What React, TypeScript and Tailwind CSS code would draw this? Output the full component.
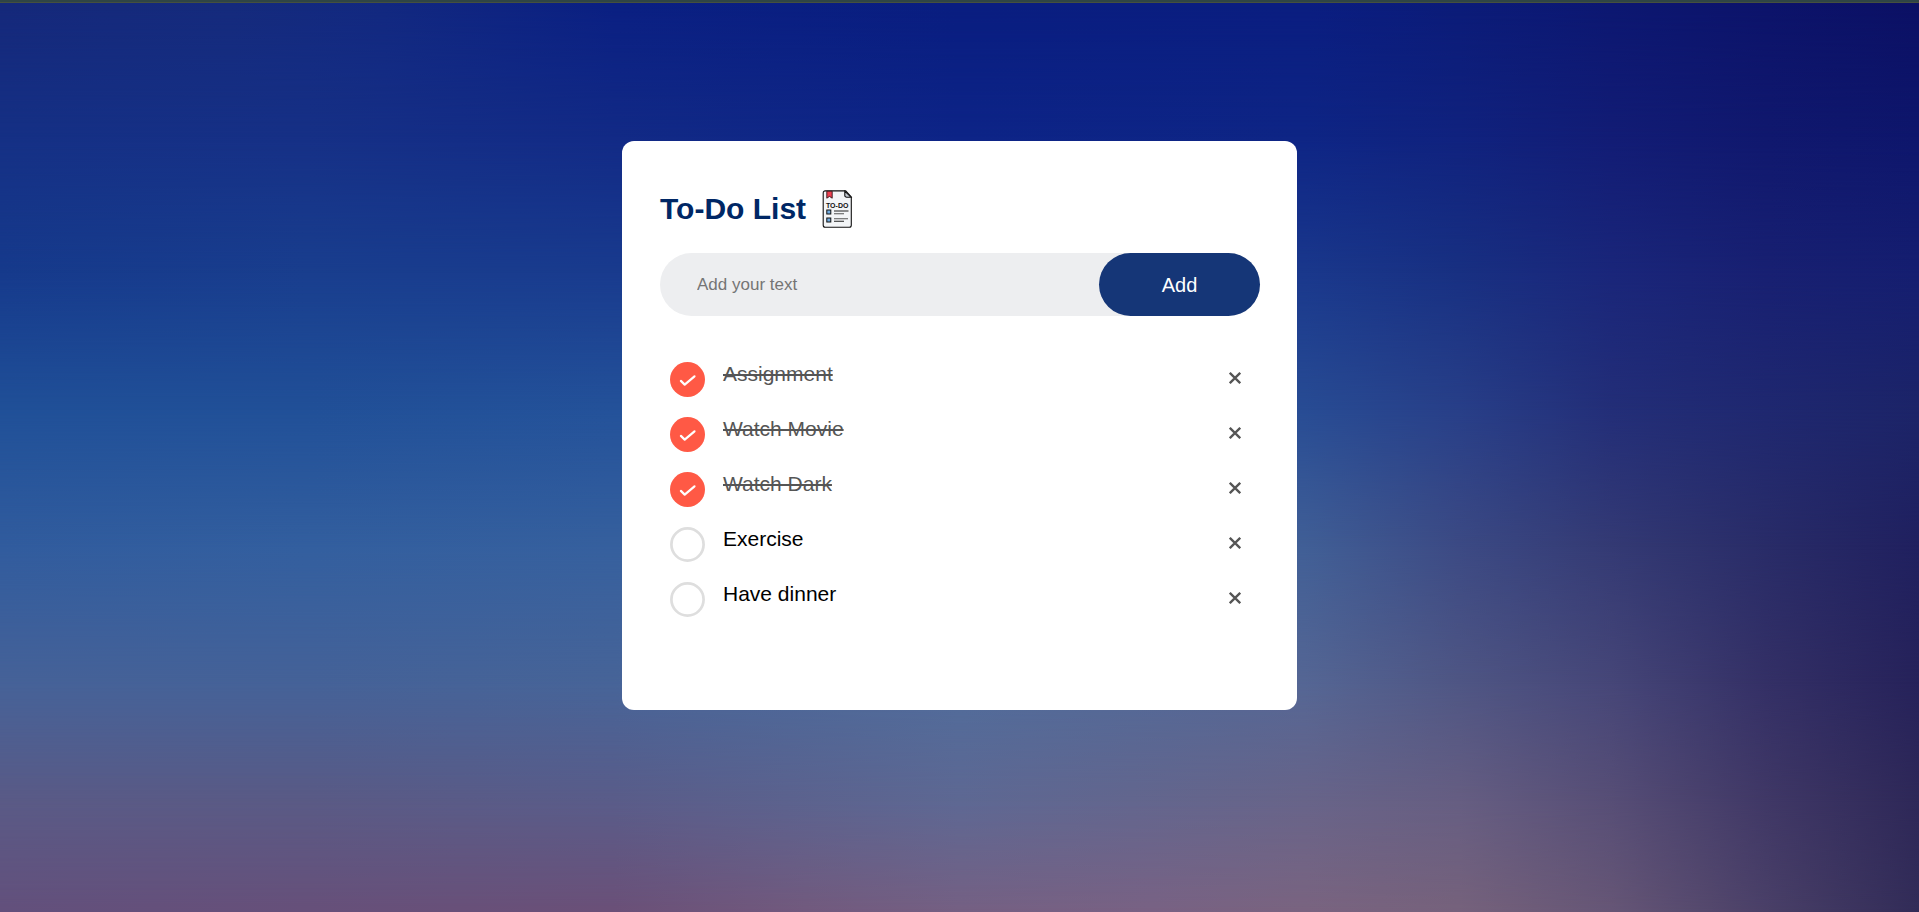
import { useState } from "react";
import type { FormEvent } from "react";

type Task = { id: number; text: string; done: boolean };

const initialTasks: Task[] = [
  { id: 1, text: "Assignment", done: true },
  { id: 2, text: "Watch Movie", done: true },
  { id: 3, text: "Watch Dark", done: true },
  { id: 4, text: "Exercise", done: false },
  { id: 5, text: "Have dinner", done: false },
];

// Each layer holds one horizontal band of colour that fades into the band below it.
function Backdrop() {
  return (
    <div aria-hidden="true" className="absolute inset-0">
      <div className="absolute inset-0 bg-[linear-gradient(90deg,#63507c_0%,#67507a_16%,#6b5078_32%,#725a7e_42%,#756083_50%,#796284_60%,#7a6480_68%,#76627c_76%,#665676_84%,#4a4068_92%,#322c58_100%)]" />
      <div className="absolute inset-0 bg-[linear-gradient(90deg,#5a5a86_0%,#5a5a85_16%,#5a5c89_32%,#5e6893_50%,#686489_68%,#665e82_76%,#574e76_84%,#403866_92%,#2e2858_100%)] mask-[linear-gradient(180deg,#000_88%,transparent_100%)]" />
      <div className="absolute inset-0 bg-[linear-gradient(90deg,#466298_0%,#456298_16%,#476498_32%,#506c9b_50%,#556694_68%,#4f5684_76%,#464678_84%,#343066_92%,#26225a_100%)] mask-[linear-gradient(180deg,#000_75%,transparent_88%)]" />
      <div className="absolute inset-0 bg-[linear-gradient(90deg,#315c9e_0%,#335f9f_16%,#36609e_32%,#40659e_50%,#415f96_68%,#3c4a84_76%,#343a74_84%,#292c68_92%,#20205f_100%)] mask-[linear-gradient(180deg,#000_60%,transparent_75%)]" />
      <div className="absolute inset-0 bg-[linear-gradient(90deg,#205098_0%,#215098_16%,#24529a_32%,#285098_50%,#284c94_68%,#283f88_76%,#232e78_84%,#1f2870_92%,#1c2468_100%)] mask-[linear-gradient(180deg,#000_45%,transparent_60%)]" />
      <div className="absolute inset-0 bg-[linear-gradient(90deg,#163a8c_0%,#193e8e_16%,#193b8e_32%,#17368c_50%,#1a388c_68%,#183082_76%,#1a267a_84%,#182072_92%,#151e70_100%)] mask-[linear-gradient(180deg,#000_30%,transparent_45%)]" />
      <div className="absolute inset-0 bg-[linear-gradient(90deg,#153085_0%,#163086_16%,#122a86_32%,#0d2487_50%,#0e2585_68%,#10227e_76%,#121c75_84%,#10186e_92%,#0e166c_100%)] mask-[linear-gradient(180deg,#000_15%,transparent_30%)]" />
      <div className="absolute inset-0 bg-[linear-gradient(90deg,#15287a_0%,#152a7c_12%,#122880_20%,#0a1f82_32%,#091d80_50%,#0a1d80_68%,#0b1b78_76%,#0c1771_84%,#0c136a_92%,#0b1064_100%)] mask-[linear-gradient(180deg,#000_0%,transparent_15%)]" />
    </div>
  );
}

function ChecklistIcon() {
  return (
    <svg viewBox="0 0 38 38" className="size-[38px]" aria-hidden="true">
      <path d="M3.200 .9h20.500l5.600 6v28.400a2 2 0 0 1-2 2H3.200a2 2 0 0 1-2-2V2.900a2 2 0 0 1 2-2z" fill="#f3f5f7" stroke="#111" strokeWidth="1.100" />
      <path d="M22.800 1.200v4.200a1.800 1.800 0 0 0 1.800 1.800h4.400z" fill="#c5cbd3" stroke="#111" strokeWidth="1.100" />
      <path d="M4.800 1.200h5.400v7L7.500 6.400 4.800 8.200z" fill="#ee3f50" stroke="#32151a" strokeWidth=".9" />
      <text x="15.200" y="17.500" fontSize="7" fontWeight="700" textAnchor="middle" fill="#111" fontFamily="Liberation Sans, Arial, sans-serif">TO-DO</text>
      <rect x="4.800" y="20" width="4" height="4" fill="#72ace0" stroke="#111" strokeWidth="1" />
      <rect x="4.800" y="28" width="4" height="4" fill="#72ace0" stroke="#111" strokeWidth="1" />
      <path d="M12 21h14.500M12 31.200h10" stroke="#222" strokeWidth="1.100" />
      <path d="M12 23.700h10M12 28.700h14" stroke="#555" strokeWidth="1.100" />
    </svg>
  );
}

export default function App() {
  const [tasks, setTasks] = useState<Task[]>(initialTasks);
  const [draft, setDraft] = useState("");

  const addTask = (event: FormEvent) => {
    event.preventDefault();
    const text = draft.trim();
    if (!text) return;
    setTasks([...tasks, { id: Date.now(), text, done: false }]);
    setDraft("");
  };

  const toggleTask = (id: number) =>
    setTasks(tasks.map((t) => (t.id === id ? { ...t, done: !t.done } : t)));

  const removeTask = (id: number) => setTasks(tasks.filter((t) => t.id !== id));

  return (
    <div className="relative isolate flex min-h-screen flex-col font-['Liberation_Sans',Arial,sans-serif]">
      <div className="absolute inset-0 -z-10">
        <Backdrop />
      </div>
      <div className="h-[3px] border-b border-[#45503f] bg-[#2f4545]" />
      <main className="flex justify-center px-3 pt-[138px] pb-6">
        <section className="w-full max-w-[675px] rounded-xl bg-white pt-12 pr-[37px] pb-[83px] pl-[38px]">
          <h1 className="flex items-center gap-4 text-[30px] leading-10 font-bold text-[#002765]">
            To-Do List
            <ChecklistIcon />
          </h1>
          <form onSubmit={addTask} className="mt-6 mb-9 flex h-[63px] rounded-full bg-[#edeef0]">
            <input
              type="text"
              aria-label="New task"
              placeholder="Add your text"
              value={draft}
              onChange={(e) => setDraft(e.target.value)}
              className="min-w-0 flex-1 bg-transparent pl-[37px] text-[17px] outline-none placeholder:text-[#757575]"
            />
            <button type="submit" className="w-[161px] shrink-0 cursor-pointer rounded-full bg-[#153677] text-xl text-white">
              Add
            </button>
          </form>
          <ul>
            {tasks.map((task) => (
              <li key={task.id} className="flex h-[55px] items-center justify-between px-2.5">
                <label className="flex flex-1 cursor-pointer items-start gap-[18px]">
                  <input
                    type="checkbox"
                    checked={task.done}
                    onChange={() => toggleTask(task.id)}
                    className="sr-only"
                  />
                  <svg viewBox="0 0 35 35" className="size-[35px] shrink-0" aria-hidden="true">
                    {task.done ? (
                      <>
                        <circle cx="17.500" cy="17.500" r="17.500" fill="#ff5945" />
                        <path d="M10.900 18.900l3.800 3.700 9.800-8.300" fill="none" stroke="#fff" strokeWidth="2.200" strokeLinecap="round" strokeLinejoin="round" />
                      </>
                    ) : (
                      <circle cx="17.500" cy="17.500" r="16.100" fill="#fff" stroke="#dedede" strokeWidth="2.700" />
                    )}
                  </svg>
                  <span
                    className={
                      task.done
                        ? "text-[21px] leading-6 text-[#555] line-through decoration-2"
                        : "text-[21px] leading-6 text-black"
                    }
                  >
                    {task.text}
                  </span>
                </label>
                <button
                  type="button"
                  aria-label={`Delete ${task.text}`}
                  onClick={() => removeTask(task.id)}
                  className="flex size-[30px] cursor-pointer items-center justify-center pb-1"
                >
                  <svg viewBox="0 0 12 12" className="size-3" aria-hidden="true">
                    <path d="M.8 .8l10.400 10.400M11.200 .8L.8 11.200" stroke="#555" strokeWidth="2.300" />
                  </svg>
                </button>
              </li>
            ))}
          </ul>
        </section>
      </main>
    </div>
  );
}
